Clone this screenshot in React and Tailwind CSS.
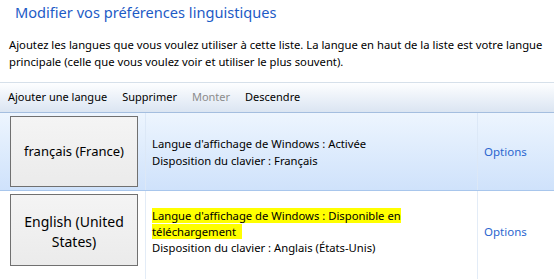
export default function App() {
  const font = { fontFamily: '"Segoe UI", "Noto Sans", "Open Sans", sans-serif' };
  return (
    <div className="w-[554px] h-[280px] overflow-hidden bg-white text-black" style={font}>
      <div className="pl-[15px] pt-[1px] h-[26px] text-[14.6px] leading-[22px] text-[#1d5bc6]">
        Modifier vos préférences linguistiques
      </div>
      <div className="pl-[9px] pt-[10px] text-[11.25px] leading-[17px] h-[56px] whitespace-nowrap">
        <div>Ajoutez les langues que vous voulez utiliser à cette liste. La langue en haut de la liste est votre langue</div>
        <div>principale (celle que vous voulez voir et utiliser le plus souvent).</div>
      </div>
      <div className="h-[31px] border-t border-[#d6e0ea] border-b border-b-[#a4bedf] bg-gradient-to-b from-[#fdfeff] to-[#dbe5f2] flex items-center text-[11px] pl-[8px] gap-[15px]">
        <span>Ajouter une langue</span>
        <span>Supprimer</span>
        <span className="text-[#8c8c8c]">Monter</span>
        <span>Descendre</span>
      </div>
      <div className="h-[78px] flex border-b border-[#a8c6ec] bg-gradient-to-b from-[#edf5fe] to-[#cfe2fb]">
        <div className="w-[145px] shrink-0 pl-[10px] pt-[3px]">
          <div className="w-[128px] h-[71px] border border-[#707070] bg-gradient-to-b from-[#f4f4f4] to-[#ebebeb] flex items-center justify-center text-[13px] leading-[19px] text-center">
            français (France)
          </div>
        </div>
        <div className="w-[332px] shrink-0 border-l border-[#dce8f7] pl-[6px] flex flex-col justify-center text-[11.25px] leading-[17px]">
          <div>Langue d'affichage de Windows : Activée</div>
          <div>Disposition du clavier : Français</div>
        </div>
        <div className="flex-1 border-l border-[#dce8f7] pl-[6px] flex items-center text-[11.5px] text-[#2a66cf]">
          Options
        </div>
      </div>
      <div className="h-[88px] flex">
        <div className="w-[145px] shrink-0 pl-[10px] pt-[3px]">
          <div className="w-[128px] h-[72px] border border-[#707070] bg-gradient-to-b from-[#f4f4f4] to-[#ebebeb] flex items-center justify-center text-[14px] leading-[20px] text-center px-[6px] pt-[3px]">
            English (United States)
          </div>
        </div>
        <div className="w-[332px] shrink-0 border-l border-[#e3ecf7] pl-[6px] pt-[17px] text-[11.25px] leading-[16px]">
          <div className="w-[270px]">
            <span className="bg-[#ffff00]">Langue d'affichage de Windows : Disponible en téléchargement&nbsp;&nbsp;</span>
          </div>
          <div>Disposition du clavier : Anglais (États-Unis)</div>
        </div>
        <div className="flex-1 border-l border-[#e3ecf7] pl-[6px] flex items-start pt-[32px] text-[11.5px] text-[#2a66cf]">
          Options
        </div>
      </div>
    </div>
  );
}
